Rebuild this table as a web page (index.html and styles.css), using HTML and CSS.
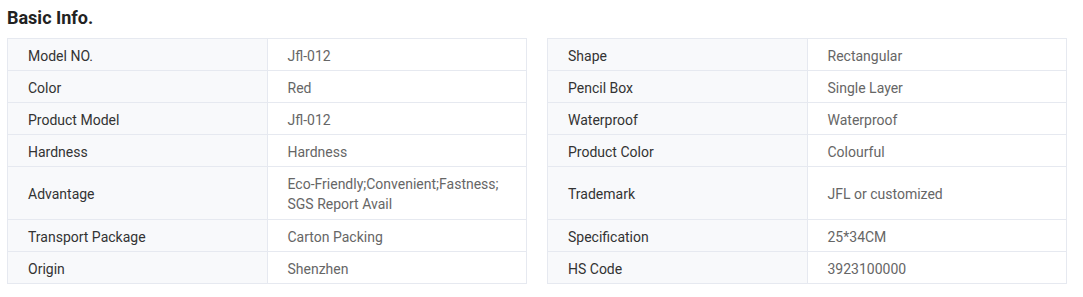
FILE: index.html
```html
<!DOCTYPE html>
<html>
<head>
<meta charset="utf-8">
<link rel="stylesheet" href="styles.css">
</head>
<body>
<div class="page">
  <h2 class="title">Basic Info.</h2>
  <div class="tables">
    <table class="info">
      <colgroup><col class="ck"><col class="cv"></colgroup>
      <tr><td class="k">Model NO.</td><td class="v">Jfl-012</td></tr>
      <tr><td class="k">Color</td><td class="v">Red</td></tr>
      <tr><td class="k">Product Model</td><td class="v">Jfl-012</td></tr>
      <tr><td class="k">Hardness</td><td class="v">Hardness</td></tr>
      <tr class="tall"><td class="k">Advantage</td><td class="v">Eco-Friendly;Convenient;Fastness; SGS Report Avail</td></tr>
      <tr><td class="k">Transport Package</td><td class="v">Carton Packing</td></tr>
      <tr><td class="k">Origin</td><td class="v">Shenzhen</td></tr>
    </table>
    <table class="info">
      <colgroup><col class="ck"><col class="cv"></colgroup>
      <tr><td class="k">Shape</td><td class="v">Rectangular</td></tr>
      <tr><td class="k">Pencil Box</td><td class="v">Single Layer</td></tr>
      <tr><td class="k">Waterproof</td><td class="v">Waterproof</td></tr>
      <tr><td class="k">Product Color</td><td class="v">Colourful</td></tr>
      <tr class="tall"><td class="k">Trademark</td><td class="v">JFL or customized</td></tr>
      <tr><td class="k">Specification</td><td class="v">25*34CM</td></tr>
      <tr><td class="k">HS Code</td><td class="v">3923100000</td></tr>
    </table>
  </div>
</div>
</body>
</html>
```

FILE: styles.css
```css
html, body {
  margin: 0;
  padding: 0;
  background: #fff;
}
.page {
  padding: 6px 16px 0 7px;
  font-family: Roboto, "Liberation Sans", Arial, sans-serif;
}
.title {
  margin: 0;
  font-size: 18px;
  line-height: 24px;
  font-weight: 700;
  color: #222;
}
.tables {
  display: flex;
  align-items: flex-start;
  gap: 20px;
  margin-top: 8px;
}
.info {
  width: 520px;
  border-collapse: collapse;
  table-layout: fixed;
  font-size: 14px;
}
.info .ck,
.info .cv {
  width: 50%;
}
.info td {
  border: 1px solid #e6e9f0;
  padding: 2px 20px 0;
  height: 29px;
  line-height: 20px;
  vertical-align: middle;
}
.info .tall td {
  height: 50px;
}
.info .k {
  background: #f8f9fb;
  color: #333;
}
.info .v {
  background: #fff;
  color: #666;
}
```
